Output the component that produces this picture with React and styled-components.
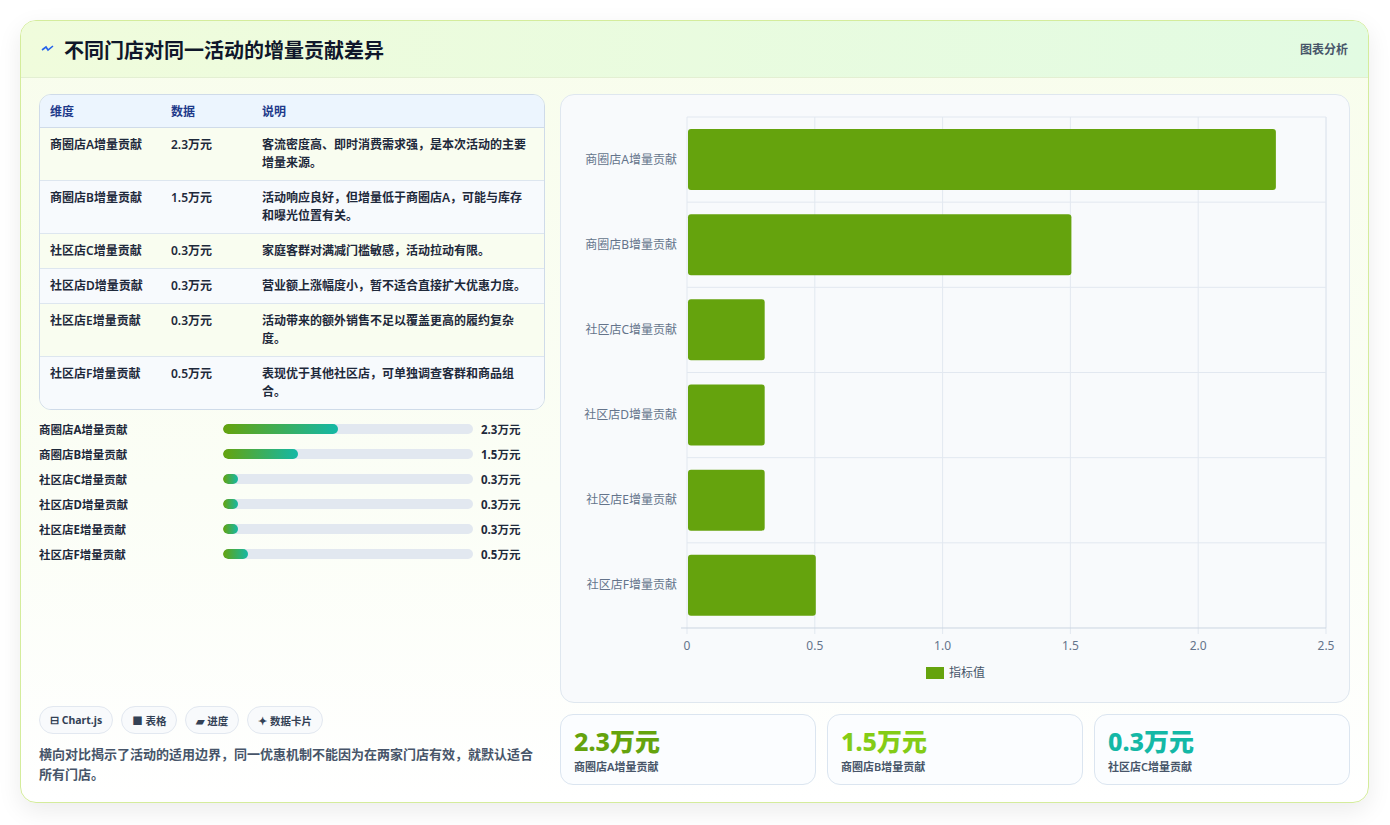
import React from "react";
import styled, { createGlobalStyle } from "styled-components";

const Global = createGlobalStyle`
  html,body{margin:0;padding:0;background:#f4f5f4;}
  body{font-family:"Noto Sans","Noto Sans CJK SC",sans-serif;color:#1e293b;}
`;

const Page = styled.div`
  width:1390px;height:825px;box-sizing:border-box;padding:20px 21px 22px 20px;background:#fff;
`;
const Card = styled.div`
  height:100%;box-sizing:border-box;border:1px solid #d4ec9c;border-radius:16px;overflow:hidden;
  background:linear-gradient(180deg,#f8fdec 0%,#fbfef6 60%,#fff 100%);
  box-shadow:0 8px 24px rgba(0,0,0,0.08);display:flex;flex-direction:column;
`;
const Header = styled.div`
  height:56px;flex:none;display:flex;align-items:center;justify-content:space-between;
  padding:0 20px;border-bottom:1px solid #e3efd2;
  background:linear-gradient(90deg,#f0fcdc,#e2fbe2);
`;
const Title = styled.h1`
  margin:0;font-size:20px;font-weight:700;color:#0f172a;display:flex;align-items:center;gap:9px;
`;
const Tag = styled.span`font-size:12px;color:#475569;font-weight:600;`;
const Body = styled.div`
  flex:1;display:grid;grid-template-columns:506px 790px;gap:15px;padding:16px 18px 18px 18px;min-height:0;
`;
const Left = styled.div`display:flex;flex-direction:column;min-height:0;`;
const Table = styled.table`
  width:100%;border-collapse:separate;border-spacing:0;border:1px solid #cfdbe9;border-radius:12px;overflow:hidden;
  font-size:12px;font-weight:600;color:#1e293b;
  th{background:#ecf5fe;color:#1e3a8a;text-align:left;height:32px;padding:0 10px;font-weight:600;border-bottom:1px solid #cfdbe9;}
  td{padding:8px 14px 8px 10px;vertical-align:top;line-height:18px;border-bottom:1px solid #dde6ef;}
  tr:last-child td{border-bottom:none;}
  tbody tr:nth-child(odd) td{background:#f9fdf0;}
  tbody tr:nth-child(even) td{background:#f7fafd;}
`;
const Bars = styled.div`display:flex;flex-direction:column;gap:9px;margin-top:11px;`;
const BarRow = styled.div`display:grid;grid-template-columns:176px 250px 1fr;align-items:center;column-gap:8px;height:16px;font-size:11.5px;font-weight:700;color:#1e293b;`;
const Track = styled.div`height:10px;border-radius:5px;background:#e2e8f0;overflow:hidden;`;
const Fill = styled.div`height:100%;border-radius:5px;background:linear-gradient(90deg,#65a30d,#14b8a6);`;
const Spacer = styled.div`flex:1;`;
const Chips = styled.div`display:flex;gap:8px;`;
const Chip = styled.span`
  height:26px;padding:0 10px;border:1px solid #e2e8f0;border-radius:14px;background:#f8fafc;
  font-size:10.5px;font-weight:700;color:#334155;display:flex;align-items:center;gap:4px;
`;
const Note = styled.p`margin:10px 0 0;font-size:13px;line-height:20px;font-weight:600;color:#475569;`;
const Right = styled.div`display:flex;flex-direction:column;gap:11px;min-height:0;`;
const ChartPanel = styled.div`
  flex:1;border:1px solid #dfe7ef;border-radius:14px;background:#f8fafc;position:relative;
`;
const Stats = styled.div`display:grid;grid-template-columns:repeat(3,1fr);gap:11px;height:74px;`;
const Stat = styled.div`
  border:1px solid #dbe5f0;border-radius:13px;background:#fbfdff;padding:10px 13px;box-sizing:border-box;
`;
const StatVal = styled.div`font-size:25px;font-weight:800;line-height:32px;color:${p=>p.$c};`;
const StatLbl = styled.div`font-size:11px;font-weight:600;color:#475569;margin-top:1px;`;

const rows = [
  ["商圈店A增量贡献","2.3万元","客流密度高、即时消费需求强，是本次活动的主要增量来源。",2.3],
  ["商圈店B增量贡献","1.5万元","活动响应良好，但增量低于商圈店A，可能与库存和曝光位置有关。",1.5],
  ["社区店C增量贡献","0.3万元","家庭客群对满减门槛敏感，活动拉动有限。",0.3],
  ["社区店D增量贡献","0.3万元","营业额上涨幅度小，暂不适合直接扩大优惠力度。",0.3],
  ["社区店E增量贡献","0.3万元","活动带来的额外销售不足以覆盖更高的履约复杂度。",0.3],
  ["社区店F增量贡献","0.5万元","表现优于其他社区店，可单独调查客群和商品组合。",0.5],
];

function Chart(){
  const W=790,H=607, x0=126, x1=765, y0=22, y1=533, band=(y1-y0)/6;
  const sx=v=>x0+(v/2.5)*(x1-x0);
  const ticks=[0,0.5,1,1.5,2,2.5];
  return (
    <svg width={W} height={H} style={{display:"block"}}>
      {ticks.map(t=><line key={t} x1={sx(t)} x2={sx(t)} y1={y0} y2={y1+6} stroke="#e2e8f0"/>)}
      {rows.map((r,i)=><line key={i} x1={x0} x2={x1} y1={y0+band*i} y2={y0+band*i} stroke="#e2e8f0"/>)}
      <line x1={x1} x2={x1} y1={y0} y2={y1} stroke="#e2e8f0"/>
      {rows.map((r,i)=>(
        <g key={i}>
          <rect x={x0+1} y={y0+band*i+12} width={sx(r[3])-x0} height={61} rx={3} fill="#65a30d"/>
          <text x={x0-10} y={y0+band*i+band/2+4} textAnchor="end" fontSize="12" fill="#64748b" fontFamily="Noto Sans, Noto Sans CJK SC, sans-serif">{r[0]}</text>
        </g>
      ))}
      <line x1={x0-6} x2={x1} y1={y1} y2={y1} stroke="#cbd5e1"/>
      {ticks.map(t=><text key={t} x={sx(t)} y={y1+22} textAnchor="middle" fontSize="12" fill="#64748b" fontFamily="Noto Sans, sans-serif">{t===0?"0":t.toFixed(1)}</text>)}
      <rect x={365} y={572} width={18} height={12} fill="#65a30d"/>
      <text x={388} y={582} fontSize="12" fill="#475569" fontFamily="Noto Sans, Noto Sans CJK SC, sans-serif">指标值</text>
    </svg>
  );
}

export default function App(){
  return (
    <Page>
      <Global/>
      <Card>
        <Header>
          <Title><svg width="14" height="10" viewBox="0 0 14 10"><path d="M1 6 L5 3 L7 6 L12 2" stroke="#2563eb" strokeWidth="1.6" fill="none"/></svg>不同门店对同一活动的增量贡献差异</Title>
          <Tag>图表分析</Tag>
        </Header>
        <Body>
          <Left>
            <Table>
              <colgroup><col style={{width:121}}/><col style={{width:91}}/><col/></colgroup>
              <thead><tr><th>维度</th><th>数据</th><th>说明</th></tr></thead>
              <tbody>{rows.map(r=><tr key={r[0]}><td>{r[0]}</td><td>{r[1]}</td><td>{r[2]}</td></tr>)}</tbody>
            </Table>
            <Bars>
              {rows.map(r=>(
                <BarRow key={r[0]}>
                  <span>{r[0]}</span>
                  <Track><Fill style={{width:`${Math.max(r[3]/5*100,6)}%`}}/></Track>
                  <span>{r[1]}</span>
                </BarRow>
              ))}
            </Bars>
            <Spacer/>
            <Chips>
              <Chip>⊟ Chart.js</Chip><Chip>■ 表格</Chip><Chip>▰ 进度</Chip><Chip>✦ 数据卡片</Chip>
            </Chips>
            <Note>横向对比揭示了活动的适用边界，同一优惠机制不能因为在两家门店有效，就默认适合所有门店。</Note>
          </Left>
          <Right>
            <ChartPanel><Chart/></ChartPanel>
            <Stats>
              <Stat><StatVal $c="#65a30d">2.3万元</StatVal><StatLbl>商圈店A增量贡献</StatLbl></Stat>
              <Stat><StatVal $c="#84cc16">1.5万元</StatVal><StatLbl>商圈店B增量贡献</StatLbl></Stat>
              <Stat><StatVal $c="#14b8a6">0.3万元</StatVal><StatLbl>社区店C增量贡献</StatLbl></Stat>
            </Stats>
          </Right>
        </Body>
      </Card>
    </Page>
  );
}
